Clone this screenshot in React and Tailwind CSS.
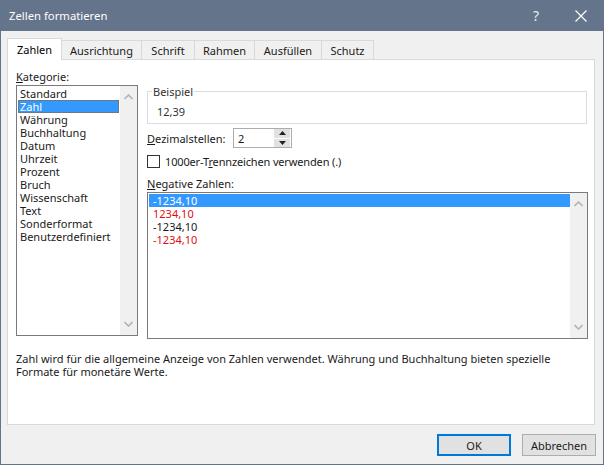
import React from 'react';

const tabs = [
  { label: 'Ausrichtung', w: 'w-[80px]' },
  { label: 'Schrift', w: 'w-[53px]' },
  { label: 'Rahmen', w: 'w-[60px]' },
  { label: 'Ausfüllen', w: 'w-[67px]' },
  { label: 'Schutz', w: 'w-[52px]' },
];

const categories = ['Standard', 'Zahl', 'Währung', 'Buchhaltung', 'Datum', 'Uhrzeit', 'Prozent', 'Bruch', 'Wissenschaft', 'Text', 'Sonderformat', 'Benutzerdefiniert'];

const negatives = [
  { text: '-1234,10', cls: 'bg-[#3399ff] text-white' },
  { text: '1234,10', cls: 'text-[#dc0f14]' },
  { text: '-1234,10', cls: 'text-[#1a1a1a]' },
  { text: '-1234,10', cls: 'text-[#dc0f14]' },
];

const Chevron = ({ down }) => (
  <svg width="9" height="6" viewBox="0 0 9 6" className="text-[#b4b4b4]">
    <path d={down ? 'M.5 1l4 4 4-4' : 'M.5 5l4-4 4 4'} fill="none" stroke="currentColor" strokeWidth="1.6" />
  </svg>
);

const Scrollbar = () => (
  <div className="w-[17px] h-full bg-[#f0f0f0] flex flex-col items-center justify-between py-[8px] shrink-0">
    <Chevron />
    <Chevron down />
  </div>
);

const App = () => {
  return (
    <div className="w-[604px] h-[465px] flex flex-col bg-[#64748a] font-['Noto_Sans',sans-serif] text-[11px] leading-[13px] text-[#1a1a1a] overflow-hidden">
      {/* Title bar */}
      <div className="h-[31px] shrink-0 flex items-center pl-[9px] pr-[17px] text-white text-[11.3px]">
        <span className="flex-1">Zellen formatieren</span>
        <span className="w-[20px] text-[14px] text-[#e8ecf1] text-center">?</span>
        <svg width="12" height="12" viewBox="0 0 12 12" className="ml-[29px]">
          <path d="M.5.5l11 11M11.500.5l-11 11" fill="none" stroke="#ffffff" strokeWidth="1.2" />
        </svg>
      </div>

      <div className="flex-1 mx-px mb-px bg-[#f0f0f0] pl-[6px] pr-[7px] pt-[7px] flex flex-col">
        {/* Tabs */}
        <div className="h-[22px] -mb-px flex items-start shrink-0 relative z-10">
          <div className="w-[55px] h-[22px] bg-white border border-b-0 border-[#d9d9d9] flex items-center justify-center text-black">Zahlen</div>
          {tabs.map((t) => (
            <div key={t.label} className={`${t.w} h-[19px] mt-[2px] bg-[#f0f0f0] border-t border-r border-[#d9d9d9] flex items-center justify-center`}>{t.label}</div>
          ))}
        </div>

        {/* Panel */}
        <div className="h-[366px] mr-px bg-white border border-[#d9d9d9] pl-[8px] pr-[7px] flex flex-col">
          <div className="flex gap-[9px] pt-[9px]">
            <div className="w-[122px] shrink-0">
              <div className="h-[16px] pb-[2px] flex items-center"><span><u>K</u>ategorie:</span></div>
              <div className="h-[251px] border border-[#7a7a7a] flex">
                <ul className="flex-1 pt-px pl-px pr-px">
                  {categories.map((c) => (
                    <li key={c} className={`h-[13px] pl-[2px] flex items-center ${c === 'Zahl' ? 'bg-[#3399ff] text-white outline -outline-offset-1 outline-[#6f7780]' : ''}`}>{c}</li>
                  ))}
                </ul>
                <Scrollbar />
              </div>
            </div>

            <div className="flex-1 pt-[22px]">
              {/* Beispiel */}
              <div className="h-[33px] border border-[#dcdcdc] relative pl-[9px] pt-[13px] text-[#333]">
                <span className="absolute left-[4px] -top-[7px] bg-white px-px">Beispiel</span>
                12,39
              </div>

              <div className="flex items-center h-[20px] mt-[4px]">
                <span className="w-[86px]"><u>D</u>ezimalstellen:</span>
                <div className="w-[59px] h-[20px] border border-[#adadad] flex items-center pl-[4px] pr-px">
                  <span className="flex-1">2</span>
                  <div className="w-[16px] h-[18px] flex flex-col gap-px">
                    <div className="flex-1 bg-[#e1e1e1] flex items-center justify-center">
                      <svg width="7" height="4" viewBox="0 0 7 4"><path d="M3.500 0L7 4H0z" fill="#222" /></svg>
                    </div>
                    <div className="flex-1 bg-[#e1e1e1] flex items-center justify-center">
                      <svg width="7" height="4" viewBox="0 0 7 4"><path d="M0 0h7L3.500 4z" fill="#222" /></svg>
                    </div>
                  </div>
                </div>
              </div>

              <div className="flex items-center h-[13px] mt-[7px] gap-[5px]">
                <div className="w-[13px] h-[13px] border border-[#333]" />
                <span className="tracking-[-0.15px]">1000er-T<u>r</u>ennzeichen verwenden (.)</span>
              </div>

              <div className="h-[13px] mt-[9px] flex items-center"><span><u>N</u>egative Zahlen:</span></div>

              <div className="h-[147px] mt-[2px] -mr-px border border-[#7a7a7a] flex">
                <ul className="flex-1 pt-px pl-px">
                  {negatives.map((n, i) => (
                    <li key={i} className={`h-[13px] pl-[4px] flex items-center ${n.cls}`}>{n.text}</li>
                  ))}
                </ul>
                <Scrollbar />
              </div>
            </div>
          </div>

          <p className="mt-[13px]">
            Zahl wird für die allgemeine Anzeige von Zahlen verwendet. Währung und Buchhaltung bieten spezielle<br />
            Formate für monetäre Werte.
          </p>
        </div>

        {/* Buttons */}
        <div className="flex-1 flex items-center justify-end gap-[11px] pt-px">
          <button className="w-[74px] h-[22px] bg-[#e1e1e1] border-2 border-[#0078d7] text-center">OK</button>
          <button className="w-[74px] h-[22px] bg-[#e1e1e1] border border-[#adadad] text-center">Abbrechen</button>
        </div>
      </div>
    </div>
  );
};

export default App;
